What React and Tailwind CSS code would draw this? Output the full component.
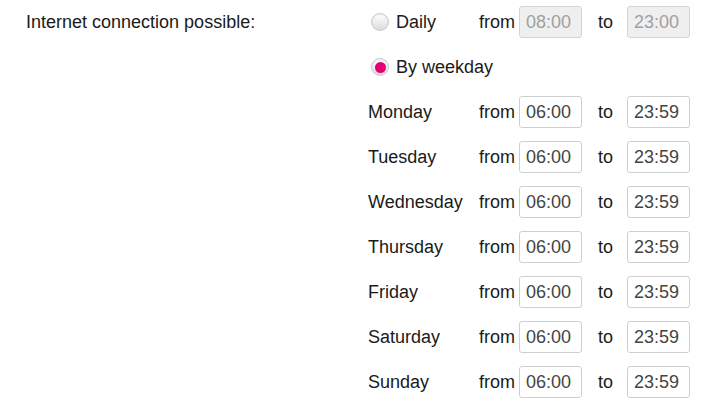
const days = ['Monday', 'Tuesday', 'Wednesday', 'Thursday', 'Friday', 'Saturday', 'Sunday']

const Radio = ({ checked }) => (
  <span className="w-[18px] h-[18px] rounded-full border border-[#c8c8c8] bg-gradient-to-b from-[#ffffff] to-[#dcdcdc] shadow-[inset_0_1px_1px_rgba(0,0,0,0.08)] flex items-center justify-center shrink-0">
    {checked && <span className="w-[11px] h-[11px] rounded-full bg-[#e20074]" />}
  </span>
)

const TimeBox = ({ value, disabled }) => (
  <div
    className={`w-[63px] h-8 shrink-0 rounded-[3px] border flex items-center pl-[6px] ${
      disabled
        ? 'bg-[#efefef] border-[#d4d4d4] text-[#a0a0a0]'
        : 'bg-white border-[#cfcfcf] text-[#444]'
    }`}
  >
    {value}
  </div>
)

const Range = ({ from, to, disabled }) => (
  <div className="flex items-center">
    <span className="w-[40px] shrink-0">from</span>
    <TimeBox value={from} disabled={disabled} />
    <span className="w-[45px] shrink-0 pl-[16px]">to</span>
    <TimeBox value={to} disabled={disabled} />
  </div>
)

export default function App() {
  return (
    <div
      className="w-[705px] h-[406px] bg-white text-[18px] text-[#1a1a1a] pt-[6px] flex"
      style={{ fontFamily: '"Liberation Sans", Arial, sans-serif' }}
    >
      <div className="w-[368px] pl-[26px] h-8 flex items-center shrink-0">
        Internet connection possible:
      </div>

      <div className="flex flex-col gap-[13px]">
        <div className="h-8 flex items-center">
          <div className="w-[111px] shrink-0 flex items-center pl-[3px]">
            <Radio />
            <span className="ml-[7px]">Daily</span>
          </div>
          <Range from="08:00" to="23:00" disabled />
        </div>

        <div className="h-8 flex items-center pl-[3px]">
          <Radio checked />
          <span className="ml-[7px]">By weekday</span>
        </div>

        {days.map((d) => (
          <div key={d} className="h-8 flex items-center">
            <span className="w-[111px] shrink-0">{d}</span>
            <Range from="06:00" to="23:59" />
          </div>
        ))}
      </div>
    </div>
  )
}
